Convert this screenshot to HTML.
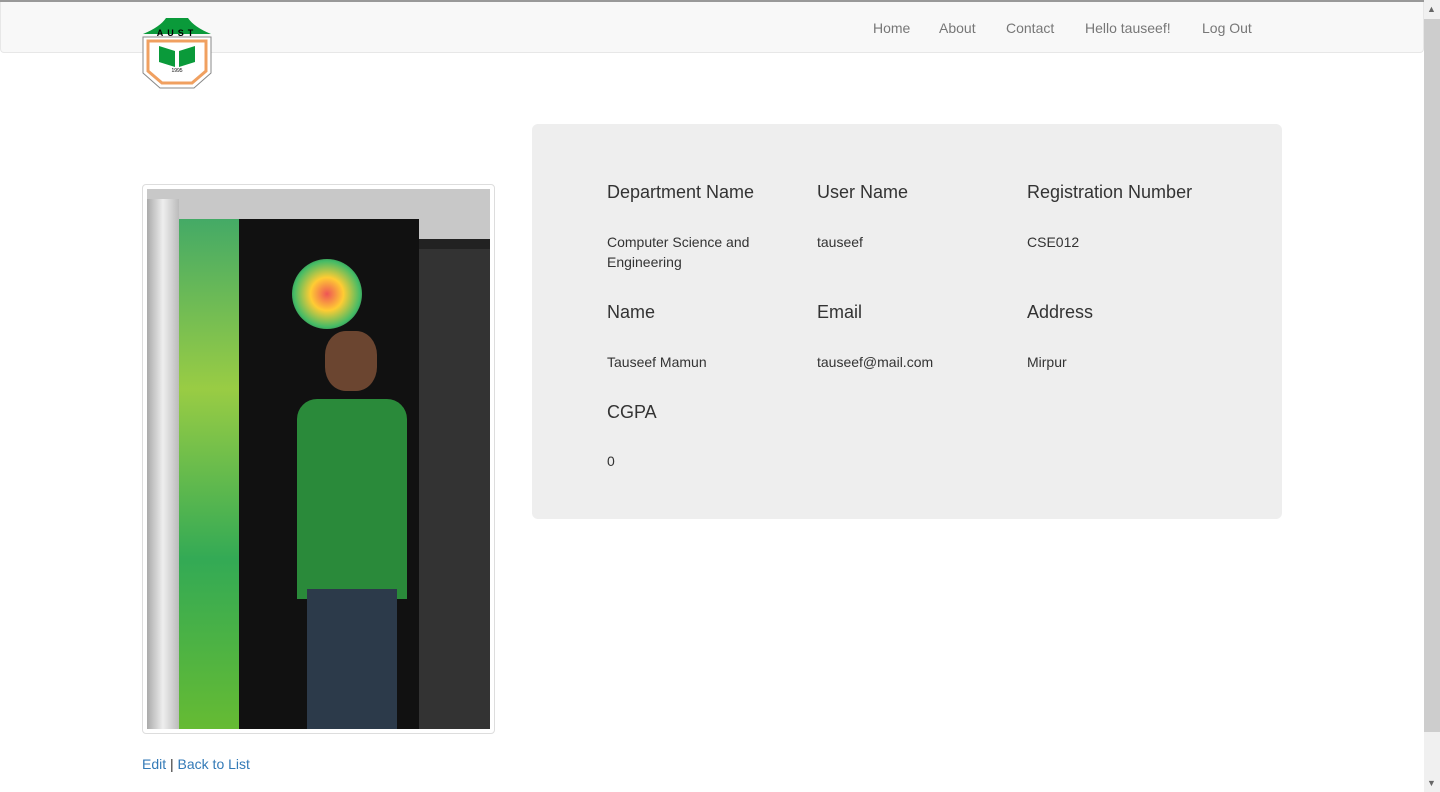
<!DOCTYPE html>
<html><head><meta charset="utf-8"><style>
body{margin:0;width:1440px;height:792px;overflow:hidden;background:#fff;font-family:"Liberation Sans",sans-serif;color:#333;position:relative}
.top{position:absolute;left:0;top:0;width:1440px;height:2px;background:#999}
.nav{position:absolute;left:0;top:2px;width:1422px;height:50px;background:#f8f8f8;border:1px solid #e7e7e7;border-top:none;border-radius:0 0 4px 4px}
.nav a{position:absolute;top:18px;font-size:14px;color:#777;text-decoration:none}
.sb{position:absolute;left:1424px;top:0;width:16px;height:792px;background:#f0f0f0}
.thumb{position:absolute;left:1424px;top:19px;width:16px;height:713px;background:#cdcdcd}
.panel{position:absolute;left:532px;top:124px;width:750px;height:395px;background:#eee;border-radius:6px}
.h{position:absolute;font-size:18px;color:#333}
.v{position:absolute;font-size:14px;color:#333;line-height:20px}
.photo{position:absolute;left:142px;top:184px;width:351px;height:548px;border:1px solid #ddd;border-radius:4px;background:#fff}
.img{position:absolute;left:4px;top:4px;width:343px;height:540px;overflow:hidden;background:#222}
.links{position:absolute;left:142px;top:756px;font-size:14px}
.links a{color:#337ab7;text-decoration:none}
</style></head><body>
<div class="top"></div>
<div class="nav">
<a style="left:872px">Home</a><a style="left:938px">About</a><a style="left:1005px">Contact</a><a style="left:1084px">Hello tauseef!</a><a style="left:1201px">Log Out</a>
</div>
<svg style="position:absolute;left:142px;top:17px" width="70" height="72" viewBox="0 0 70 72">
<path d="M1 20 L69 20 L69 56 L52 71 L18 71 L1 56Z" fill="#fff" stroke="#888"/>
<path d="M1 17 Q18 10 24 1 L46 1 Q52 10 69 17Z" fill="#0a9a3a"/>
<text x="35" y="19" font-size="9" font-weight="bold" text-anchor="middle" font-family="Liberation Sans" letter-spacing="4">AUST</text>
<path d="M6 24 L64 24 L64 54 L50 66 L20 66 L6 54Z" fill="none" stroke="#f0a060" stroke-width="3"/>
<path d="M17 29 L33 34 L33 50 L17 45Z M37 34 L53 29 L53 45 L37 50Z" fill="#0a9a3a"/>
<text x="35" y="55" font-size="5" text-anchor="middle">1995</text>
</svg>
<div class="photo"><div class="img">
<div style="position:absolute;left:0;top:0;width:343px;height:50px;background:#c8c8c8"></div>
<div style="position:absolute;left:0;top:10px;width:32px;height:530px;background:linear-gradient(90deg,#aaa,#eee,#bbb)"></div>
<div style="position:absolute;left:32px;top:30px;width:60px;height:510px;background:linear-gradient(180deg,#4a6,#9c4,#3a5,#6b3)"></div>
<div style="position:absolute;left:92px;top:30px;width:180px;height:510px;background:#111"></div>
<div style="position:absolute;left:272px;top:60px;width:71px;height:480px;background:#333"></div>
<div style="position:absolute;left:145px;top:70px;width:70px;height:70px;border-radius:50%;background:radial-gradient(#e55,#fc3,#4b6,#111)"></div>
<div style="position:absolute;left:178px;top:142px;width:52px;height:60px;border-radius:40%;background:#6b4530"></div>
<div style="position:absolute;left:150px;top:210px;width:110px;height:200px;background:#2a8a3a;border-radius:20px 20px 0 0"></div>
<div style="position:absolute;left:160px;top:400px;width:90px;height:140px;background:#2c3a4a"></div>
</div></div>
<div class="links"><a>Edit</a> | <a>Back to List</a></div>
<div class="panel">
<div class="h" style="left:75px;top:58px">Department Name</div>
<div class="h" style="left:285px;top:58px">User Name</div>
<div class="h" style="left:495px;top:58px">Registration Number</div>
<div class="v" style="left:75px;top:108px">Computer Science and<br>Engineering</div>
<div class="v" style="left:285px;top:108px">tauseef</div>
<div class="v" style="left:495px;top:108px">CSE012</div>
<div class="h" style="left:75px;top:178px">Name</div>
<div class="h" style="left:285px;top:178px">Email</div>
<div class="h" style="left:495px;top:178px">Address</div>
<div class="v" style="left:75px;top:228px">Tauseef Mamun</div>
<div class="v" style="left:285px;top:228px">tauseef@mail.com</div>
<div class="v" style="left:495px;top:228px">Mirpur</div>
<div class="h" style="left:75px;top:278px">CGPA</div>
<div class="v" style="left:75px;top:327px">0</div>
</div>
<div class="sb"></div><div class="thumb"></div>
<div style="position:absolute;left:1427px;top:4px;font-size:9px;color:#666">&#9650;</div>
<div style="position:absolute;left:1427px;top:778px;font-size:9px;color:#666">&#9660;</div>
</body></html>
